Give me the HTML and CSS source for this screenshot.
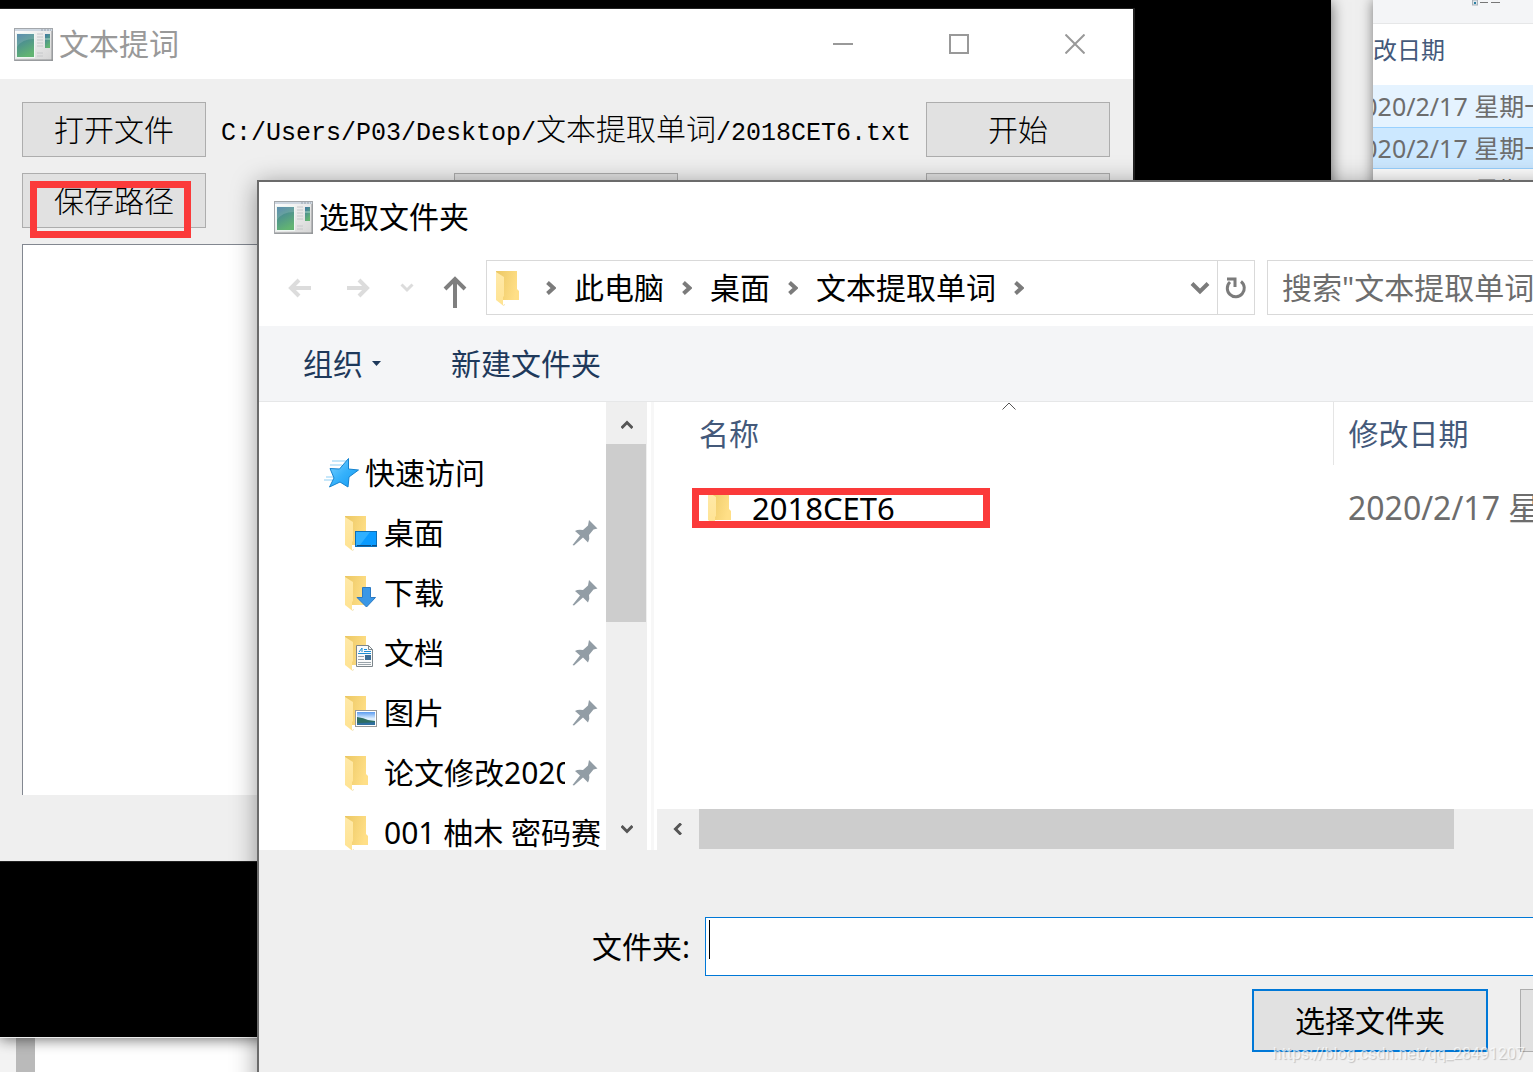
FILE: index.html
```html
<!DOCTYPE html>
<html lang="zh-CN">
<head>
<meta charset="UTF-8">
<meta name="viewport" content="width=device-width, initial-scale=1.0">
<title>文本提词</title>
<link rel="stylesheet" href="styles.css">
</head>
<body>

<!-- shared drawings -->
<svg class="defs" aria-hidden="true">
    <defs>
        <linearGradient id="gBack" x1="0" y1="0" x2="1" y2="0.3"><stop offset="0" stop-color="#ebc763"/><stop offset="1" stop-color="#ffdf87"/></linearGradient>
        <linearGradient id="gFront" x1="0" y1="0" x2="0" y2="1"><stop offset="0" stop-color="#ffe9a8"/><stop offset="1" stop-color="#ffe392"/></linearGradient>
        <linearGradient id="gApp" x1="0" y1="0" x2="0.4" y2="1"><stop offset="0" stop-color="#3f78a4"/><stop offset="1" stop-color="#62b472"/></linearGradient>
        <linearGradient id="gFrame" x1="0" y1="0" x2="1" y2="1"><stop offset="0" stop-color="#ffffff"/><stop offset="1" stop-color="#d4d4d4"/></linearGradient>
        <linearGradient id="gStar" x1="0" y1="0" x2="1" y2="1"><stop offset="0" stop-color="#7fd3ff"/><stop offset="0.5" stop-color="#37b2fb"/><stop offset="1" stop-color="#129af3"/></linearGradient>
        <linearGradient id="gSky" x1="0" y1="0" x2="0" y2="1"><stop offset="0" stop-color="#5b9bf0"/><stop offset="0.5" stop-color="#dceeff"/></linearGradient>
    </defs>
    <symbol id="app" viewBox="0 0 39 33">
        <rect x="0.5" y="0.5" width="38" height="32" fill="url(#gFrame)" stroke="#a3a7ab"/>
        <path d="M1 2h37" stroke="#cfd8e2" stroke-width="2"/>
        <path d="M27 2h10" stroke="#9aa3ac" stroke-dasharray="2 1"/>
        <path d="M1 32h38M38 3v30" stroke="#8f9193"/>
        <rect x="2.500" y="5.500" width="18" height="24" fill="url(#gApp)" stroke="#eef7f2"/>
        <path d="M3 19Q8 11 20 11V6H3z" fill="#fff" opacity="0.15"/>
        <path d="M23 6h6M23 9h6M23 12h6M23 15h6M23 18h6M23 25h6M23 28h6" stroke="#c6c8ca"/>
        <rect x="31" y="6" width="5" height="14" fill="url(#gApp)"/>
        <path d="M31 11h5" stroke="#a9d5c9"/>
    </symbol>
    <symbol id="folder" viewBox="0 0 34 36">
        <path d="M0 1h21v18l2 2v9H2z" fill="url(#gBack)"/>
        <path d="M0 2l8 5v19l-1 1v8.500L0 30z" fill="url(#gFront)"/>
        <path d="M7 35.500l2-1" stroke="#f3e3b5"/>
    </symbol>
    <symbol id="pin" viewBox="0 0 26 26">
        <path d="M17 0l8.500 8.500-4 1-4.500 5.500q1 4-1 7.500l-5-5-9 8L0.500 25l7.500-9.500-5-4.500q3-2 8-1l5-4.500z" fill="#929da5"/>
    </symbol>
    <symbol id="crumb" viewBox="0 0 10 14">
        <path d="M1.500 1.500l6 5.500-6 5.500" fill="none" stroke="#7b7b7b" stroke-width="4"/>
    </symbol>
</svg>

<div class="desktop">

    <div class="window editor">
        <span class="track"></span>
        <span class="page"></span>
    </div>

    <div class="window explorer">
        <div class="strip"></div>
        <div class="listing">
            <div class="ribbon">
                <svg width="28" height="6"><rect x="0.500" width="5" height="5" fill="#dfe5ea" stroke="#a9b2b9"/><path d="M2 3h2" stroke="#2b7fa3" stroke-width="2"/><path d="M8 2.500h8M19 2.500h9" stroke="#777"/></svg>
            </div>
            <div class="column"><span>修改日期</span></div>
            <div class="entry hover"><span>2020/2/17 星期一</span></div>
            <div class="entry selected"><span>2020/2/17 星期一</span></div>
            <div class="entry"><span>2020/2/17 星期一</span></div>
        </div>
    </div>

    <div class="window console"></div>

    <div class="window tool">
        <div class="titlebar inactive">
            <svg class="app-icon"><use href="#app"/></svg>
            <span class="title">文本提词</span>
            <div class="controls">
                <button aria-label="最小化"><svg width="20" height="20"><path d="M0 10h20" stroke="#999" stroke-width="2"/></svg></button>
                <button aria-label="最大化"><svg width="20" height="20"><rect x="1" y="1" width="18" height="18" fill="none" stroke="#999" stroke-width="2"/></svg></button>
                <button aria-label="关闭"><svg width="20" height="20"><path d="M0.500 0.500l19 19M19.500 0.500l-19 19" stroke="#999" stroke-width="2"/></svg></button>
            </div>
        </div>
        <div class="client">
            <div class="row">
                <button class="push">打开文件</button>
                <span class="path"><span class="mono">C:/Users/P03/Desktop/</span>文本提取单词<span class="mono">/2018CET6.txt</span></span>
                <button class="push">开始</button>
            </div>
            <div class="row">
                <button class="push">保存路径<span class="mark"></span></button>
                <button class="push wide" aria-label="清空"></button>
                <button class="push" aria-label="退出"></button>
            </div>
            <textarea class="output" aria-label="结果" readonly></textarea>
        </div>
    </div>

    <div class="window dialog">
        <div class="titlebar">
            <svg class="app-icon"><use href="#app"/></svg>
            <span class="title">选取文件夹</span>
        </div>

        <div class="nav">
            <div class="arrows">
                <button aria-label="后退"><svg width="24" height="20"><path d="M23 10H3M11 2l-8 8 8 8" fill="none" stroke="#dcdcdc" stroke-width="4"/></svg></button>
                <button aria-label="前进"><svg width="24" height="20"><path d="M1 10h20M13 2l8 8-8 8" fill="none" stroke="#dcdcdc" stroke-width="4"/></svg></button>
                <button class="recent" aria-label="历史"><svg width="14" height="10"><path d="M1.500 1.500L7 7l5.500-5.500" fill="none" stroke="#dcdcdc" stroke-width="3"/></svg></button>
                <button class="up" aria-label="上移"><svg width="24" height="32"><path d="M12 32V4M2 13L12 3l10 10" fill="none" stroke="#7f7f7f" stroke-width="4"/></svg></button>
            </div>
            <div class="address">
                <svg class="folder"><use href="#folder"/></svg>
                <svg class="crumb"><use href="#crumb"/></svg>
                <a href="#">此电脑</a>
                <svg class="crumb"><use href="#crumb"/></svg>
                <a href="#">桌面</a>
                <svg class="crumb"><use href="#crumb"/></svg>
                <a href="#">文本提取单词</a>
                <svg class="crumb"><use href="#crumb"/></svg>
                <button class="history" aria-label="展开"><svg width="20" height="14"><path d="M2 2.500l8 8 8-8" fill="none" stroke="#7b7b7b" stroke-width="4"/></svg></button>
                <button class="refresh" aria-label="刷新"><svg width="22" height="22"><path d="M16 4.500A8.500 8.500 0 1 1 5 5" fill="none" stroke="#7b7b7b" stroke-width="3"/><path d="M2 2h8v8" fill="none" stroke="#7b7b7b" stroke-width="3"/></svg></button>
            </div>
            <input class="search" type="text" aria-label="搜索" placeholder="搜索&quot;文本提取单词&quot;">
        </div>

        <div class="toolbar">
            <button>组织<svg width="9" height="5"><path d="M0 0h9L4.500 5z" fill="#1e395b"/></svg></button>
            <button>新建文件夹</button>
        </div>

        <div class="panes">
            <ul class="tree">
                <li class="root">
                    <svg width="36" height="30"><path d="M8 3h16M6 7h12M2 19h8M0 22h12" stroke="#8fd0f5"/><path d="M24.500 0.500v10.500l10 1-9.500 7-1 10-8-5-10.500 5 4.500-9L6 10.500l9.500 0.500z" fill="url(#gStar)" stroke="#1583cf"/></svg>
                    <span>快速访问</span>
                </li>
                <li>
                    <svg class="folder"><use href="#folder"/><rect x="10.500" y="16.500" width="21" height="15" fill="#0a9bff" stroke="#0b6fb8"/><path d="M11 17h14L15 30h-4z" fill="#2fb0ff"/><path d="M12 30.500h20" stroke="#0d4f86" stroke-dasharray="14 1"/></svg>
                    <span>桌面</span><svg class="pin"><use href="#pin"/></svg>
                </li>
                <li>
                    <svg class="folder"><use href="#folder"/><path d="M17.500 12.500h8v10h5L21.500 32l-9.500-9.500h5.500z" fill="#3a97e6" stroke="#2b7ac4"/></svg>
                    <span>下载</span><svg class="pin"><use href="#pin"/></svg>
                </li>
                <li>
                    <svg class="folder"><use href="#folder"/><path d="M11.500 10.500h12l4 4v17h-16z" fill="#fafbfb" stroke="#7d868b"/><path d="M23.500 10.500v4h4" fill="none" stroke="#7d868b"/><path d="M14 17l3-4v4M19 14.500h3M19 16.500h7M13 18.500h13" fill="none" stroke="#1d8fd4"/><path d="M13 21.500h6M13 24.500h6M13 27.500h13M13 29.500h13" stroke="#9aa4aa"/><path d="M20 20h6v5h-6z" fill="#3c6f97"/></svg>
                    <span>文档</span><svg class="pin"><use href="#pin"/></svg>
                </li>
                <li>
                    <svg class="folder"><use href="#folder"/><rect x="10.500" y="15.500" width="21" height="16" fill="#fff" stroke="#999"/><rect x="12" y="17" width="18" height="13" fill="url(#gSky)"/><path d="M12 22q7 1 11 3l7 1v4H12z" fill="#2e6d62"/><path d="M12 28q9 0 18-1v3H12z" fill="#2f6f9f"/></svg>
                    <span>图片</span><svg class="pin"><use href="#pin"/></svg>
                </li>
                <li>
                    <svg class="folder"><use href="#folder"/></svg>
                    <span>论文修改2020</span><svg class="pin"><use href="#pin"/></svg>
                </li>
                <li>
                    <svg class="folder"><use href="#folder"/></svg>
                    <span>001 柚木 密码赛</span>
                </li>
            </ul>
            <div class="vscroll">
                <svg width="12" height="9"><path d="M0.500 8L6 2.500 11.500 8" fill="none" stroke="#555" stroke-width="3"/></svg>
                <span class="thumb"></span>
                <svg width="12" height="9"><path d="M0.500 1L6 6.500 11.500 1" fill="none" stroke="#555" stroke-width="3"/></svg>
            </div>
            <div class="files">
                <table>
                    <thead>
                        <tr><th class="name">名称<svg class="sort" width="14" height="8"><path d="M0.500 7.500L7 1l6.500 6.500" fill="none" stroke="#555"/></svg></th><th class="date">修改日期</th></tr>
                    </thead>
                    <tbody>
                        <tr><td class="name"><div class="file"><svg class="folder"><use href="#folder"/></svg>2018CET6<span class="mark"></span></div></td><td class="date">2020/2/17 星期一</td></tr>
                    </tbody>
                </table>
                <div class="hscroll">
                    <svg width="9" height="12"><path d="M8 0.500L2.500 6 8 11.500" fill="none" stroke="#555" stroke-width="3"/></svg>
                    <span class="thumb"></span>
                </div>
            </div>
        </div>

        <div class="footer">
            <div class="field">
                <label for="folder-name">文件夹:</label>
                <div class="entry-box"><input id="folder-name" type="text"></div>
            </div>
            <div class="actions">
                <button class="default">选择文件夹</button>
                <button aria-label="取消"></button>
            </div>
        </div>
    </div>

    <span class="watermark">https://blog.csdn.net/qq_28491207</span>
</div>

</body>
</html>
```
FILE: styles.css
```css
* {
    box-sizing: border-box;
}

body {
    margin: 0;
    font-family: "Noto Sans", "Noto Sans CJK SC", sans-serif;
    font-size: 30px;
    line-height: 40px;
    color: #000;
}

button, input, textarea {
    font: inherit;
    color: inherit;
    border-radius: 0;
}

button {
    padding: 0;
    border: none;
    background: none;
}

svg {
    display: block;
    flex: none;
}

.defs {
    position: absolute;
    width: 0;
    height: 0;
}

.desktop {
    position: relative;
    height: 100vh;
    overflow: clip;
    background-color: #fff;
}

.window {
    position: absolute;
}

/* windows at the back */
.editor {
    left: 0;
    right: 0;
    bottom: 0;
    height: 60px;
    display: flex;
    background-color: #f3f3f3;
}

.editor .track {
    width: 19px;
    margin-left: 16px;
    background-color: #bababa;
}

.editor .page {
    flex: 1;
    background-color: #fff;
}

.explorer {
    top: 0;
    left: 1331px;
    right: 0;
    height: 300px;
    display: flex;
    font-size: 24px;
}

.strip {
    width: 42px;
    background-color: #efefef;
}

.listing {
    flex: 1;
    overflow: hidden;
    background-color: #fff;
    box-shadow: 0 0 12px rgba(0, 0, 0, 0.5);
}

.listing span {
    display: block;
    margin-left: -24px;
    white-space: nowrap;
}

.ribbon {
    height: 24px;
    padding-left: 99px;
    border-bottom: 1px solid #e6e7e8;
    background-color: #f4f5f7;
}

.column {
    height: 61px;
    padding-top: 6px;
    color: #44597a;
}

.entry {
    height: 42px;
    padding-top: 1px;
    font-size: 25px;
    color: #6d6d6d;
}

.hover {
    background-color: #e5f3ff;
}

.selected {
    padding-top: 0;
    border: solid #99d1ff;
    border-width: 1px 0;
    background-color: #cce8ff;
}

.console {
    top: 0;
    left: 0;
    width: 1331px;
    height: 1037px;
    background-color: #000;
    box-shadow: 0 1px 0 #eee, 0 2px 14px rgba(0, 0, 0, 0.6);
}

/* main window */
.tool {
    top: 8px;
    left: 0;
    width: 1135px;
    border: solid #222;
    border-width: 1px 2px 1px 0;
}

.titlebar {
    display: flex;
    align-items: center;
    height: 70px;
    padding-left: 14px;
    background-color: #fff;
}

.dialog .titlebar {
    padding-left: 15px;
}

.inactive {
    color: #999;
}

.app-icon {
    width: 39px;
    height: 33px;
}

.title {
    margin-left: 6px;
}

.controls {
    display: flex;
    margin-left: auto;
}

.controls button {
    display: flex;
    justify-content: center;
    width: 116px;
}

.client {
    padding: 23px 23px 66px 22px;
    background-color: #efefef;
}

.row {
    display: flex;
    justify-content: space-between;
    align-items: center;
    margin-bottom: 16px;
}

.push {
    position: relative;
    width: 184px;
    height: 55px;
    border: 1px solid #adadad;
    background-color: #e1e1e1;
    font-weight: 300;
}

.wide {
    width: 224px;
}

.path {
    padding-top: 4px;
    font-weight: 300;
    white-space: nowrap;
}

.mono {
    font-family: "Liberation Mono", monospace;
    font-size: 25px;
}

.mark {
    position: absolute;
    border: 7px solid #fb3a3a;
}

.push .mark {
    top: 7px;
    left: 7px;
    width: 161px;
    height: 57px;
}

.output {
    display: block;
    width: 100%;
    height: 551px;
    border: 1px solid #828790;
    border-bottom: none;
    background-color: #fff;
    resize: none;
    outline: none;
}

/* folder dialog */
.dialog {
    top: 180px;
    left: 257px;
    right: -257px;
    border: 2px solid #6b6b6b;
    background-color: #efefef;
    box-shadow: 0 4px 24px rgba(0, 0, 0, 0.4);
}

.nav {
    display: flex;
    padding: 8px 14px 11px 29px;
    background-color: #fff;
}

.arrows {
    display: flex;
    align-items: center;
    gap: 34px;
    width: 198px;
}

.arrows .recent {
    margin-left: -4px;
}

.arrows .up {
    margin-left: -5px;
    padding-top: 8px;
}

.address {
    display: flex;
    align-items: center;
    width: 769px;
    height: 55px;
    padding-left: 9px;
    border: 1px solid #d9d9d9;
}

.folder {
    width: 34px;
    height: 36px;
}

.address .folder {
    margin-right: -2px;
}

.address a {
    color: #000;
    text-decoration: none;
}

.crumb {
    width: 10px;
    height: 14px;
    margin: 0 18px;
}

.history {
    margin-left: auto;
}

.refresh {
    display: flex;
    justify-content: center;
    align-items: center;
    width: 37px;
    height: 53px;
    margin-left: 7px;
    border-left: 1px solid #d9d9d9;
}

.search {
    flex: 1;
    min-width: 0;
    height: 55px;
    margin-left: 12px;
    padding: 0 14px;
    border: 1px solid #d9d9d9;
    background-color: #fff;
}

.search::placeholder {
    color: #6d6d6d;
    opacity: 1;
}

.toolbar {
    display: flex;
    gap: 70px;
    height: 76px;
    padding-left: 44px;
    border-bottom: 1px solid #e6e7e8;
    background-color: #f4f5f7;
    color: #1e395b;
}

.toolbar button {
    display: flex;
    align-items: center;
    gap: 9px;
}

.panes {
    display: flex;
    height: 448px;
    background-color: #fff;
}

.tree {
    width: 347px;
    margin: 0;
    padding: 41px 0 0;
    overflow: hidden;
    list-style: none;
}

.tree li {
    display: flex;
    align-items: center;
    height: 60px;
    padding: 0 8px 0 86px;
}

.tree li:last-child {
    padding-right: 0;
}

.tree .root {
    padding-left: 65px;
}

.tree span {
    flex: 1;
    margin-left: 5px;
    overflow: hidden;
    white-space: nowrap;
}

.pin {
    width: 26px;
    height: 26px;
    margin-left: 7px;
}

.vscroll {
    display: flex;
    flex-direction: column;
    align-items: center;
    width: 41px;
    padding: 18px 0 16px;
    background-color: #efefef;
}

.vscroll .thumb {
    width: 100%;
    height: 178px;
    margin: 15px 0 auto;
    border-right: 1px solid #efefef;
    background-color: #cdcdcd;
}

.files {
    display: flex;
    flex-direction: column;
    flex: 1;
    min-width: 0;
    margin-left: 4px;
    padding-left: 3px;
    border-left: 3px solid #f7f7f7;
}

.files table {
    width: 100%;
    border-collapse: collapse;
    table-layout: fixed;
}

.files th, .files td {
    padding: 0 0 0 15px;
    text-align: left;
    font-weight: normal;
    white-space: nowrap;
}

.files th {
    position: relative;
    height: 63px;
    color: #44597a;
}

.files td {
    height: 86px;
    font-size: 32px;
    color: #6d6d6d;
}

.files .name {
    width: 676px;
    padding-left: 42px;
}

.files th.date {
    border-left: 1px solid #e5e5e5;
}

.sort {
    position: absolute;
    top: 0;
    left: 345px;
}

.file {
    position: relative;
    display: flex;
    align-items: center;
    gap: 10px;
    width: 298px;
    height: 40px;
    margin-left: -7px;
    padding-left: 16px;
    font-size: 31px;
    color: #000;
}

.file .mark {
    top: 0;
    right: 0;
    bottom: 0;
    left: 0;
}

.hscroll {
    display: flex;
    align-items: center;
    gap: 17px;
    height: 41px;
    margin-top: auto;
    padding-left: 16px;
    border-bottom: 1px solid #efefef;
    background-color: #efefef;
}

.hscroll .thumb {
    width: 755px;
    height: 40px;
    background-color: #cdcdcd;
}

.footer {
    padding: 67px 32px 40px;
}

.field {
    display: flex;
    align-items: center;
}

.field label {
    width: 399px;
    text-align: right;
}

.entry-box {
    position: relative;
    flex: 1;
    margin-left: 15px;
}

/* text cursor */
.entry-box::after {
    content: "";
    position: absolute;
    top: 3px;
    left: 4px;
    width: 1px;
    height: 39px;
    background-color: #000;
}

.entry-box input {
    display: block;
    width: 100%;
    height: 59px;
    padding: 0 3px;
    border: 1px solid #0078d7;
    outline: none;
    background-color: #fff;
}

.actions {
    display: flex;
    justify-content: flex-end;
    gap: 32px;
    margin-top: 13px;
}

.actions button {
    width: 236px;
    height: 63px;
    border: 1px solid #adadad;
    background-color: #e1e1e1;
}

.actions .default {
    border: 2px solid #0078d7;
}

.watermark {
    position: absolute;
    right: 8px;
    bottom: 8px;
    font-family: Roboto, sans-serif;
    font-size: 16px;
    line-height: 20px;
    color: rgba(255, 255, 255, 0.7);
    text-shadow: 1px 1px 1px rgba(0, 0, 0, 0.2);
}
```
